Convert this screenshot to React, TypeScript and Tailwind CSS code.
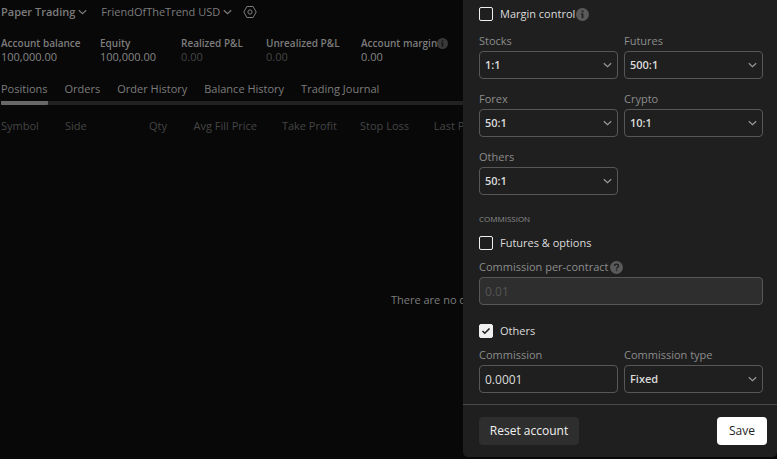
import { useId, useState } from "react";
import type { ReactNode } from "react";

function Chevron({ className = "" }: { className?: string }) {
  return (
    <svg viewBox="0 0 9 6" className={`h-[6px] w-[9px] ${className}`} fill="none" stroke="currentColor" strokeWidth="1.2" aria-hidden="true">
      <path d="M.8 1.2l3.7 3.4 3.7-3.4" />
    </svg>
  );
}

function InfoIcon({ className = "" }: { className?: string }) {
  return (
    <svg viewBox="0 0 12 12" className={`shrink-0 ${className}`} aria-hidden="true">
      <circle cx="6" cy="6" r="6" fill="#5a5a5a" />
      <path d="M5.2 2.4h1.7v1.5H5.2zM4.4 5h2.4v4.5H5.3V6.1h-.9z" fill="#1f1f1f" />
    </svg>
  );
}

function HelpIcon() {
  return (
    <svg viewBox="0 0 12 12" className="size-[13px] shrink-0" aria-hidden="true">
      <circle cx="6" cy="6" r="6" fill="#5a5a5a" />
      <path d="M4.2 4.7C4.2 3.5 5 2.9 6 2.9s1.8.6 1.8 1.6C7.8 5.7 6.1 5.8 6.1 7.1" fill="none" stroke="#1f1f1f" strokeWidth="1.3" />
      <path d="M5.4 8h1.3v1.3H5.4z" fill="#1f1f1f" />
    </svg>
  );
}

function SettingsIcon() {
  return (
    <svg viewBox="0 0 14 14" className="size-[14px]" fill="none" stroke="currentColor" aria-hidden="true">
      <path d="M3.9 1.5h6.2L13.2 7l-3.1 5.5H3.9L.8 7z" />
      <circle cx="7" cy="7" r="2.1" />
    </svg>
  );
}

const stats = [
  { label: "Account balance", value: "100,000.00", width: "w-[99px]" },
  { label: "Equity", value: "100,000.00", width: "w-[81px]" },
  { label: "Realized P&L", value: "0.00", dim: true, width: "w-[85px]" },
  { label: "Unrealized P&L", value: "0.00", dim: true, width: "w-[95px]" },
  { label: "Account margin", value: "0.00", info: true, width: "w-[110px]" },
];

const tabs = ["Positions", "Orders", "Order History", "Balance History", "Trading Journal"];

const columns = [
  { label: "Symbol", className: "w-[64px] text-left" },
  { label: "Side", className: "w-[35px] text-left" },
  { label: "Qty", className: "w-[67px] text-right" },
  { label: "Avg Fill Price", className: "w-[90px] text-right" },
  { label: "Take Profit", className: "w-[80px] text-right" },
  { label: "Stop Loss", className: "w-[72px] text-right" },
  { label: "Last Price", className: "w-[74px] text-right" },
];

function TradingPanel() {
  return (
    <main className="min-h-screen overflow-hidden pl-px text-[11px] leading-4 whitespace-nowrap text-[#7c7c7c]">
      <header className="flex h-6 items-center">
        <button className="flex items-center gap-[3px] font-semibold">
          Paper Trading
          <Chevron />
        </button>
        <button className="ml-[14px] flex items-center gap-[3px]">
          FriendOfTheTrend USD
          <Chevron />
        </button>
        <button className="ml-[11px]" aria-label="Account settings">
          <SettingsIcon />
        </button>
      </header>

      <dl className="mt-3 flex">
        {stats.map((stat) => (
          <div key={stat.label} className={`shrink-0 ${stat.width}`}>
            <dt className="flex h-[14px] items-center text-[10px] font-semibold">
              {stat.label}
              {stat.info && <InfoIcon className="size-[11px] opacity-60" />}
            </dt>
            <dd className={`leading-[14px] ${stat.dim ? "text-[#444444]" : "text-[#858585]"}`}>{stat.value}</dd>
          </div>
        ))}
      </dl>

      <nav className="mt-[17px] border-b-4 border-[#222222]">
        <ul className="flex gap-[17px]">
          {tabs.map((tab, index) => (
            <li key={tab} className={`-mb-1 h-6 rounded-b-[1px] border-b-4 ${index === 0 ? "border-[#686868]" : "border-transparent"}`}>
              <button>{tab}</button>
            </li>
          ))}
        </ul>
      </nav>

      <table className="mt-[13px] w-[482px] table-fixed text-[#454545]">
        <thead>
          <tr>
            {columns.map((column) => (
              <th key={column.label} className={`p-0 font-normal ${column.className}`}>{column.label}</th>
            ))}
          </tr>
        </thead>
      </table>
      <p className="mt-[158px] pl-[390px]">There are no open positions</p>
    </main>
  );
}

function Field({ label, icon, children }: { label: string; icon?: ReactNode; children: (id: string) => ReactNode }) {
  const id = useId();
  return (
    <div>
      <div className="mb-[2px] flex h-4 items-center gap-[2px]">
        <label htmlFor={id} className="text-[#8c8c8c]">{label}</label>
        {icon}
      </div>
      {children(id)}
    </div>
  );
}

function SelectField({ label, options }: { label: string; options: string[] }) {
  return (
    <Field label={label}>
      {(id) => (
        <div className="relative">
          <select id={id} className="block h-7 w-full appearance-none rounded-[4px] border border-[#575757] bg-transparent px-[5px] font-semibold text-[#dbdbdb]">
            {options.map((option) => (
              <option key={option}>{option}</option>
            ))}
          </select>
          <Chevron className="pointer-events-none absolute top-[11px] right-[6px] text-[#9a9a9a]" />
        </div>
      )}
    </Field>
  );
}

function TextField({ label, icon, value, disabled }: { label: string; icon?: ReactNode; value: string; disabled?: boolean }) {
  return (
    <Field label={label} icon={icon}>
      {(id) => (
        <input
          id={id}
          type="text"
          defaultValue={value}
          disabled={disabled}
          className="block h-7 w-full rounded-[4px] border border-[#575757] px-[5px] text-[12px] text-[#dbdbdb] disabled:bg-[#2e2e2e] disabled:text-[#555555]"
        />
      )}
    </Field>
  );
}

function CheckRow({ label, initial = false, icon }: { label: string; initial?: boolean; icon?: ReactNode }) {
  const [checked, setChecked] = useState(initial);
  return (
    <div className="flex h-4 items-center gap-px">
      <label className="flex items-center gap-[7px] font-medium text-[#dbdbdb]">
        <span className="grid">
          <input
            type="checkbox"
            checked={checked}
            onChange={(event) => setChecked(event.target.checked)}
            className="col-start-1 row-start-1 size-[14px] appearance-none rounded-[2px] border border-[#f0f0f0] checked:bg-[#f0f0f0]"
          />
          {checked && (
            <svg viewBox="0 0 14 14" className="pointer-events-none col-start-1 row-start-1 size-[14px]" fill="none" stroke="#1f1f1f" strokeWidth="1.5" aria-hidden="true">
              <path d="M3.5 7l2.3 2.3L10.5 4.5" />
            </svg>
          )}
        </span>
        {label}
      </label>
      {icon}
    </div>
  );
}

function AccountDialog() {
  return (
    <section role="dialog" aria-label="Account settings" className="absolute top-0 right-0 w-[314px] rounded-b-[5px] bg-[#1f1f1f] text-[11px] leading-4">
      <div className="border-b border-[#4a4a4a] pt-[6px] pr-[14px] pb-[11px] pl-4">
        <CheckRow label="Margin control" icon={<InfoIcon className="size-[13px]" />} />
        <div className="mt-[11px] grid grid-cols-2 gap-x-[6px] gap-y-3">
          <SelectField label="Stocks" options={["1:1", "2:1", "5:1"]} />
          <SelectField label="Futures" options={["500:1", "100:1"]} />
          <SelectField label="Forex" options={["50:1", "100:1"]} />
          <SelectField label="Crypto" options={["10:1", "20:1"]} />
          <SelectField label="Others" options={["50:1", "100:1"]} />
        </div>
        <h2 className="mt-4 text-[8px] text-[#8c8c8c]">COMMISSION</h2>
        <div className="mt-2">
          <CheckRow label="Futures & options" />
        </div>
        <div className="mt-2">
          <TextField label="Commission per-contract" icon={<HelpIcon />} value="0.01" disabled />
        </div>
        <div className="mt-[18px]">
          <CheckRow label="Others" initial />
        </div>
        <div className="mt-2 grid grid-cols-2 gap-x-[6px]">
          <TextField label="Commission" value="0.0001" />
          <SelectField label="Commission type" options={["Fixed", "Percent"]} />
        </div>
      </div>
      <footer className="flex justify-between py-3 pr-[10px] pl-4 text-[12px]">
        <button className="h-7 w-[100px] rounded-[4px] bg-[#2e2e2e] font-medium text-[#f0f0f0]">Reset account</button>
        <button className="h-7 w-[50px] rounded-[4px] bg-white text-[#1f1f1f]">Save</button>
      </footer>
    </section>
  );
}

export default function App() {
  return (
    <div className="relative min-h-screen overflow-hidden bg-[#080808] font-['Trebuchet_MS','Open_Sans',sans-serif]">
      <TradingPanel />
      <AccountDialog />
    </div>
  );
}
